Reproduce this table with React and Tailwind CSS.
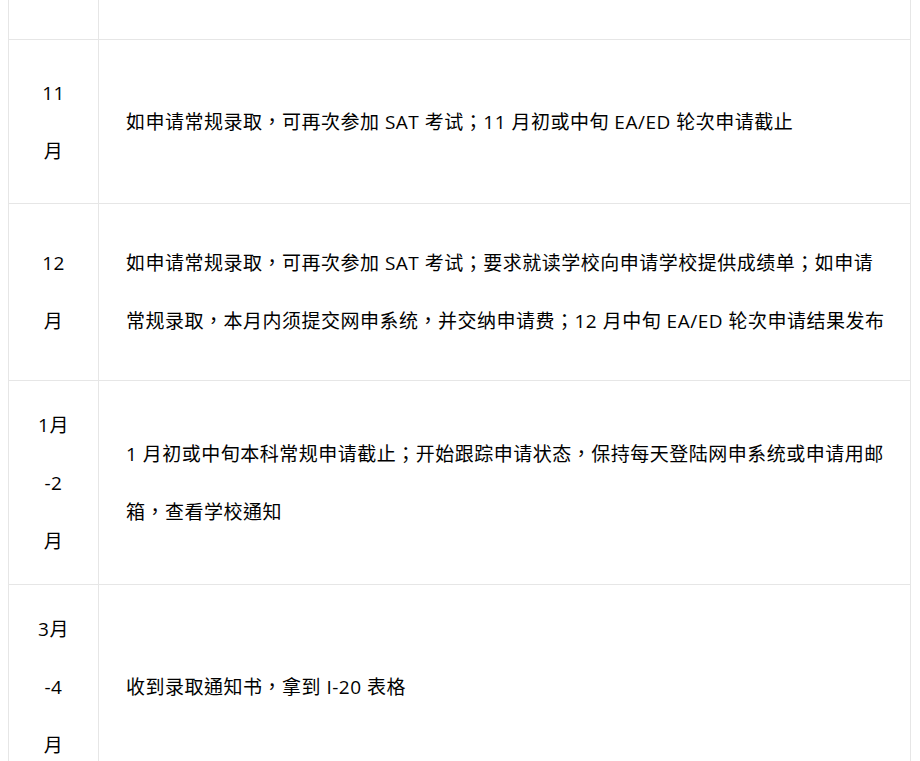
const rows = [
  { h: "h-[164px]", month: ["11", "月"], text: ["如申请常规录取，可再次参加 SAT 考试；11 月初或中旬 EA/ED 轮次申请截止"] },
  {
    h: "h-[177px]",
    month: ["12", "月"],
    text: [
      "如申请常规录取，可再次参加 SAT 考试；要求就读学校向申请学校提供成绩单；如申请",
      "常规录取，本月内须提交网申系统，并交纳申请费；12 月中旬 EA/ED 轮次申请结果发布",
    ],
  },
  {
    h: "h-[204px]",
    month: ["1月", "-2", "月"],
    text: [
      "1 月初或中旬本科常规申请截止；开始跟踪申请状态，保持每天登陆网申系统或申请用邮",
      "箱，查看学校通知",
    ],
  },
  { h: "h-[205px]", month: ["3月", "-4", "月"], text: ["收到录取通知书，拿到 I-20 表格"] },
];

export default function App() {
  return (
    <div className="min-h-screen bg-white overflow-hidden">
      <div
        className="ml-2 w-[903px] border-x border-[#e6e6e6] text-[19px] leading-[58px] tracking-[0.5px] text-black"
        style={{ fontFamily: '"Open Sans", "Noto Sans CJK TC", sans-serif' }}
      >
        {/* row continued from above */}
        <div className="flex h-[40px] border-b border-[#e6e6e6]">
          <div className="w-[90px] shrink-0 border-r border-[#e6e6e6]" />
          <div className="flex-1" />
        </div>

        {rows.map((r, i) => (
          <div key={i} className={`flex ${r.h} border-b border-[#e6e6e6]`}>
            <div className="w-[90px] shrink-0 border-r border-[#e6e6e6] flex flex-col items-center justify-center">
              {r.month.map((m, j) => (
                <div key={j}>{m}</div>
              ))}
            </div>
            <div className="flex-1 pl-[27px] flex flex-col justify-center">
              {r.text.map((t, j) => (
                <div key={j} className="whitespace-nowrap">{t}</div>
              ))}
            </div>
          </div>
        ))}
      </div>
    </div>
  );
}
